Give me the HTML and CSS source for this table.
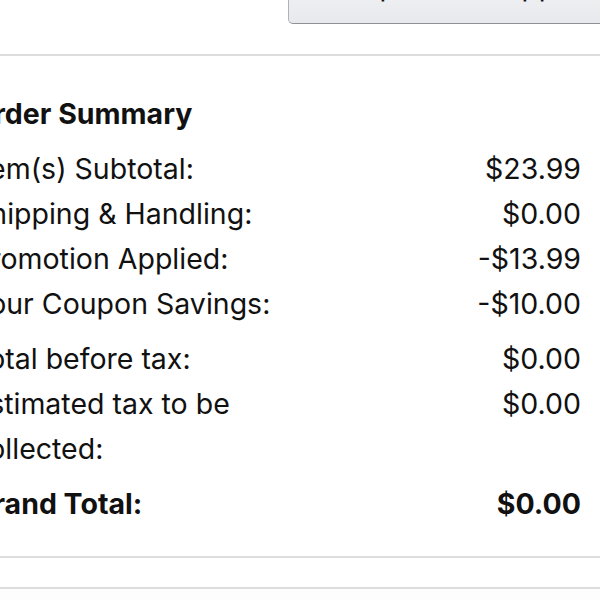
FILE: index.html
```html
<!DOCTYPE html>
<html lang="en">
<head>
<meta charset="utf-8">
<title>Order Summary</title>
<link rel="stylesheet" href="styles.css">
</head>
<body>
<div class="actions">
  <button class="btn" type="button">Get product support</button>
</div>
<section class="box summary">
  <div class="content">
    <h2 class="title">Order Summary</h2>
    <div class="group">
      <div class="row"><span class="label">Item(s) Subtotal:</span><span class="value">$23.99</span></div>
      <div class="row"><span class="label">Shipping &amp; Handling:</span><span class="value">$0.00</span></div>
      <div class="row"><span class="label">Promotion Applied:</span><span class="value">-$13.99</span></div>
      <div class="row"><span class="label">Your Coupon Savings:</span><span class="value">-$10.00</span></div>
    </div>
    <div class="group">
      <div class="row"><span class="label">Total before tax:</span><span class="value">$0.00</span></div>
      <div class="row"><span class="label">Estimated tax to be collected:</span><span class="value">$0.00</span></div>
    </div>
    <div class="group">
      <div class="row total"><span class="label">Grand Total:</span><span class="value">$0.00</span></div>
    </div>
  </div>
</section>
<section class="box next"></section>
</body>
</html>
```
FILE: styles.css
```css
html, body {
  margin: 0;
  padding: 0;
  overflow: hidden;
  background: #fff;
}
body {
  width: 600px;
  height: 600px;
  font-family: Inter, "DejaVu Sans", sans-serif;
  color: #111;
}
.actions {
  height: 54px;
  display: flex;
  justify-content: flex-end;
}
.btn {
  box-sizing: border-box;
  width: 342px;
  height: 64px;
  margin-top: -40px;
  margin-right: -30px;
  padding: 12px 0 0;
  border: 1px solid #adb1b8;
  border-color: #c5c8cd #adb1b8 #8d9096;
  border-radius: 5px;
  background: linear-gradient(#f7f8fa, #e7e9ec);
  box-shadow: 0 1px 0 rgba(255,255,255,.6) inset;
  font-family: inherit;
  font-size: 28px;
  line-height: 26px;
  color: #111;
  display: flex;
  justify-content: center;
  align-items: flex-start;
}
.box {
  border-top: 2px solid #dddddd;
}
.summary {
  padding: 35px 19px 30px 0;
  border-bottom: 2px solid #dddddd;
}
.content {
  margin-left: -28px;
}
.title {
  margin: 0 0 10px;
  font-size: 28.5px;
  font-weight: 700;
  line-height: 45px;
}
.group + .group {
  margin-top: 10px;
}
.row {
  display: flex;
  justify-content: space-between;
  align-items: flex-start;
  font-size: 28.5px;
  line-height: 45px;
}
.label {
  width: 330px;
}
.value {
  text-align: right;
}
.total {
  font-weight: 700;
}
.next {
  margin-top: 29px;
  height: 20px;
  background: #fdfdfd;
}
```
